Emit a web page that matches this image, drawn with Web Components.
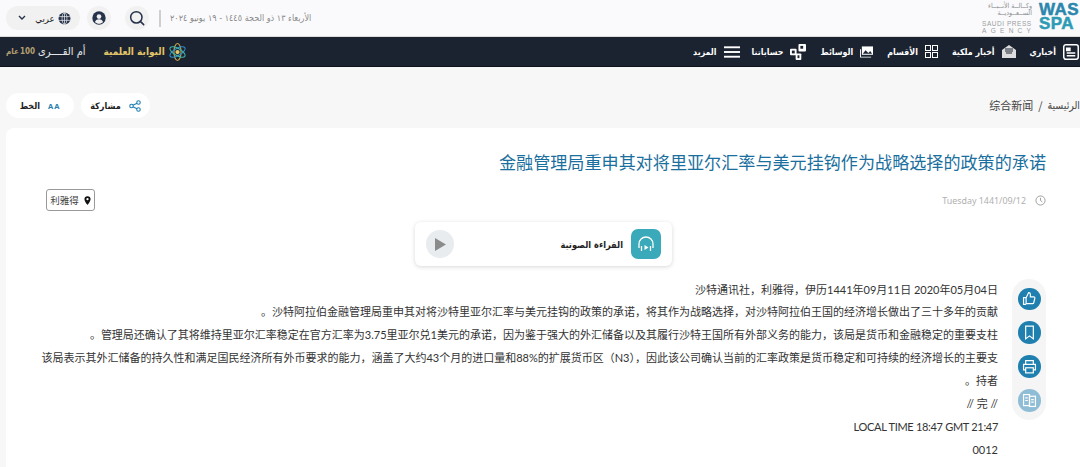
<!doctype html>
<html><head><meta charset="utf-8">
<style>
html,body{margin:0;padding:0;background:#f7f7f7;overflow:hidden;height:467px}
body{font-family:"Noto Sans","Noto Sans CJK SC",sans-serif;color:#222}
</style></head>
<body>
<spa-top></spa-top>
<spa-nav></spa-nav>
<spa-crumbs></spa-crumbs>
<spa-article></spa-article>
<script>
const def=(n,html)=>customElements.define(n,class extends HTMLElement{constructor(){super();this.attachShadow({mode:'open'}).innerHTML=html}});
const AR='"DejaVu Sans Condensed","DejaVu Sans",sans-serif';
def('spa-top',`<style>
:host{display:flex;align-items:center;height:37px;background:#fafafc;box-sizing:border-box;padding:0 0 0 6px;border-bottom:1px solid #dcdcdc}
.pill{display:flex;align-items:center;background:#f1f1f1;border-radius:12px;height:24px}
.lang{width:74px;box-sizing:border-box;padding:0 9px 0 12px;justify-content:space-between;font:9.500px ${AR};color:#222}
.c{width:24px;border-radius:50%;justify-content:center}
.u{margin-left:7px}.s{margin-left:14px}
.div{width:2px;height:17px;background:#cfcfcf;margin-left:10px}
.date{font:9px ${AR};color:#8a8a8a;margin-left:9px;white-space:nowrap}
.logo{margin-left:auto;display:flex;align-items:center;gap:7px}
.ltxt{width:50px;font-size:6.500px;color:#9a9d9e;line-height:7px;font-family:"Liberation Sans",sans-serif}
.ar{font:7px/7.500px ${AR};text-align:right;color:#8d9091;white-space:nowrap;margin-bottom:2px}
.sp{display:block;letter-spacing:.55px;white-space:nowrap}.ag{display:block;letter-spacing:4.300px;white-space:nowrap}
.mark{width:41px;height:30px;font:bold 17px/14px "Liberation Sans",sans-serif;color:#2b86ad;letter-spacing:.4px;white-space:nowrap;-webkit-text-stroke:.5px currentColor}
.mark b{display:block;color:#2e9bb5}
</style>
<div class="pill lang"><svg width="8" height="6" viewBox="0 0 8 6"><path d="M1 1l3 3 3-3" fill="none" stroke="#26324a" stroke-width="1.4"/></svg><span dir="rtl" style="margin-left:6px">عربي</span><svg width="13" height="13" viewBox="0 0 24 24" fill="none" stroke="#26324a" stroke-width="2"><circle cx="12" cy="12" r="11" fill="#26324a" stroke="none"/><g stroke="#f1f1f1" stroke-width="1.3"><ellipse cx="12" cy="12" rx="4.5" ry="11"/><path d="M2 8.500h20M2 15.500h20M12 1v22"/></g></svg></div>
<div class="pill c u"><svg width="14" height="14" viewBox="0 0 24 24"><circle cx="12" cy="12" r="11.500" fill="#26324a"/><circle cx="12" cy="9.500" r="4" fill="#f1f1f1"/><path d="M5 19c1.500-4 4-5 7-5s5.500 1 7 5c-2 2-4.500 3-7 3s-5-1-7-3z" fill="#f1f1f1"/></svg></div>
<div class="pill c s"><svg width="16" height="16" viewBox="0 0 24 24" fill="none" stroke="#26324a" stroke-width="2.300"><circle cx="11" cy="11" r="8.500"/><path d="M17 17l5 5" stroke-linecap="round"/></svg></div>
<div class="div"></div>
<div class="date" dir="rtl">الأربعاء ١٣ ذو الحجة ١٤٤٥ - ١٩ يونيو ٢٠٢٤</div>
<div class="logo"><div class="ltxt"><div class="ar" dir="rtl">وكــالــة الأنــبــاء<br>الســعــوديــة</div><span class="sp">SAUDI PRESS</span><span class="ag">AGENCY</span></div>
<div class="mark">WAS<b>SPA</b></div></div>`);
def('nav-item',`<style>
:host{display:flex;align-items:center;gap:7px;font:bold 8.800px ${AR};color:#fff;white-space:nowrap}
::slotted(svg){display:block}
</style><span dir="rtl"><slot></slot></span><slot name="i"></slot>`);
const W='fill="none" stroke="#fff" stroke-width="1.400"';
def('spa-nav',`<style>
:host{display:flex;align-items:center;height:30px;background:#1b2330;box-sizing:border-box;padding:0 0 0 6px;border-bottom:1px solid #0f141c}
.l{display:flex;align-items:center;gap:18px}
.gold{font:bold 10px ${AR};color:#e0c469;display:flex;align-items:center;gap:4px}
.um{font:11px ${AR};color:#e8e8e8}.cent{font:bold 8px ${AR};color:#b59f70;display:flex;gap:1px}
.r{margin-left:auto;display:flex;align-items:center;gap:14px;padding-right:1px}
.more{margin-right:-2px}
</style>
<div class="l"><div style="display:flex;gap:3px;align-items:center"><span class="cent"><span dir="rtl">عام</span><span>100</span></span><span class="um" dir="rtl">أم القــــرى</span></div>
<div class="gold"><span dir="rtl">البوابة العلمية</span><svg width="17" height="20" viewBox="0 0 24 28" fill="none" stroke-width="1.500"><ellipse cx="12" cy="14" rx="5" ry="12" stroke="#c9a94e"/><ellipse cx="12" cy="14" rx="5" ry="12" stroke="#2f8fd0" transform="rotate(60 12 14)"/><ellipse cx="12" cy="14" rx="5" ry="12" stroke="#3fb6a8" transform="rotate(-60 12 14)"/><circle cx="12" cy="14" r="3" fill="#e0c469" stroke="none"/></svg></div></div>
<div class="r">
<nav-item class="more">المزيد<svg slot="i" width="16" height="12" viewBox="0 0 17 12" fill="#fff"><rect width="17" height="2"/><rect y="5" width="17" height="2"/><rect y="10" width="17" height="2"/></svg></nav-item>
<nav-item>حساباتنا<svg slot="i" width="16" height="16" viewBox="0 0 17 17" fill="#fff"><rect x="0" y="5" width="7" height="7" rx="1"/><rect x="9" y="0" width="8" height="8" rx="1"/><rect x="6" y="10" width="6" height="7" rx="1"/><rect x="2" y="7" width="3" height="3" fill="#1b2330"/><rect x="11" y="2" width="3" height="3" fill="#1b2330"/><rect x="8" y="12" width="2" height="3" fill="#1b2330"/></svg></nav-item>
<nav-item>الوسائط<svg slot="i" width="13" height="12" viewBox="0 0 14 12" fill="#fff"><path d="M2 0h12v9H2z"/><path d="M0 3h1v8h11v1H0z"/><path d="M3 8l3-4 3 3 2-2 2 3z" fill="#1b2330"/></svg></nav-item>
<nav-item>الأقسام<svg slot="i" width="13" height="13" viewBox="0 0 13 13" fill="none" stroke="#fff"><rect x=".5" y=".5" width="5" height="5"/><rect x="7.500" y=".5" width="5" height="5"/><rect x=".5" y="7.500" width="5" height="5"/><rect x="7.500" y="7.500" width="5" height="5"/></svg></nav-item>
<nav-item>أخبار ملكية<svg slot="i" width="14" height="13" viewBox="0 0 14 13" fill="#ddd"><path d="M0 5l7-5 7 5v8H0z"/><path d="M3 4h8M3 6h8M4 8h6" stroke="#1b2330"/></svg></nav-item>
<nav-item>أخباري<svg slot="i" width="16" height="16" viewBox="0 0 15 15" ${W}><rect x=".7" y=".7" width="13.600" height="13.600" rx="2"/><path d="M3.500 4h3v2h-3z" fill="#fff"/><path d="M3.500 8.500h8M3.500 11h8"/></svg></nav-item>
</div>`);
def('spa-crumbs',`<style>
:host{display:flex;align-items:center;height:61px;box-sizing:border-box;padding:16px 0 0 6px}
.b{display:flex;align-items:center;background:#fff;border-radius:13px;height:25px;font:bold 9px ${AR};color:#222;gap:8px;justify-content:center}
.f{width:68px}.sh{width:69px;margin-left:7px}
.aa{font:bold 7.500px "Noto Sans";color:#2a7fae;letter-spacing:1px}
.cr{margin-left:auto;font:11px "Noto Sans CJK SC",sans-serif;color:#444;display:flex;gap:5px;align-items:center;margin-bottom:2px}
.cr span:last-child{font:10.500px ${AR}}
</style>
<div class="b f"><span dir="rtl">الخط</span><span class="aa">AA</span></div>
<div class="b sh"><span dir="rtl">مشاركة</span><svg width="12" height="12" viewBox="0 0 24 24" fill="none" stroke="#1f7fb2" stroke-width="2.200"><circle cx="19" cy="5" r="3.500"/><circle cx="5" cy="12" r="3.500"/><circle cx="19" cy="19" r="3.500"/><path d="M8 10.500l8-4M8 13.500l8 4"/></svg></div>
<div class="cr"><span>综合新闻</span><span>/</span><span dir="rtl">الرئيسية</span></div>`);
def('read-card',`<style>
:host{display:flex;align-items:center;justify-content:space-between;width:257px;height:44px;box-sizing:border-box;background:#fff;border-radius:6px;box-shadow:0 1px 4px rgba(0,0,0,.16);padding:0 11px}
.p{width:28px;height:28px;border-radius:50%;background:#e9ecef;display:flex;align-items:center;justify-content:center}
.t{display:flex;align-items:center;gap:8px;font:bold 9.200px ${AR};color:#222}
.i{width:30px;height:30px;border-radius:7px;background:#3aa9b9;display:flex;align-items:center;justify-content:center}
</style>
<div class="p"><svg width="11" height="13" viewBox="0 0 11 13"><path d="M0 0l11 6.500L0 13z" fill="#8b8b8b"/></svg></div>
<div class="t"><span dir="rtl">القراءة الصوتية</span><div class="i"><svg width="18" height="18" viewBox="0 0 18 18" fill="none" stroke="#fff" stroke-width="1.300"><path d="M2 13V9a7 7 0 0114 0v4"/><path d="M4.500 11v5M13.500 11v5"/><path d="M7.500 10l4 2.500-4 2.500z" fill="#fff" stroke="none"/></svg></div></div>`);
const rnd=(p,o='')=>`<div class="rb" style="${o}"><svg width="17" height="17" viewBox="0 0 20 20" fill="none" stroke="#fff" stroke-width="1.400">${p}</svg></div>`;
def('spa-article',`<style>
:host{display:block;margin-left:6px;background:#fff;border-radius:8px 0 0 0;height:339px;box-sizing:border-box;padding:22px 34px 0 0;position:relative}
h1{margin:0;font:400 17.100px/24px "Noto Sans CJK SC",sans-serif;color:#1b6f9e;text-align:right}
.meta{display:flex;align-items:center;margin-top:15px;height:22px;padding-left:40px}
.loc{border:1px solid #999;border-radius:3px;height:22px;width:49px;box-sizing:border-box;display:flex;align-items:center;justify-content:center;gap:5px;font:9.500px "Noto Sans CJK SC",sans-serif;color:#444}
.dt{margin-left:auto;display:flex;align-items:center;gap:9px;font:8.900px "Noto Sans",sans-serif;color:#b0b0b0}
.rc{display:flex;justify-content:center;margin:11px 0 0 35px}
.body{margin:12.500px 48px 0 35px;font:11px/22.900px Lato,"Noto Sans CJK SC",sans-serif;color:#333;text-align:right}
.body p{margin:0}
.lt{letter-spacing:-.3px}
.side{position:absolute;right:34px;top:151px;width:0;}
.rail{position:absolute;left:-34px;top:0;width:34px;background:#f5f5f5;border-radius:17px;box-sizing:border-box;padding:8.500px 5.500px;display:flex;flex-direction:column;gap:11px;height:141px}
.rb{width:23px;height:23px;border-radius:50%;background:#1f7fae;display:flex;align-items:center;justify-content:center}
</style>
<h1>金融管理局重申其对将里亚尔汇率与美元挂钩作为战略选择的政策的承诺</h1>
<div class="meta"><div class="loc"><span>利雅得</span><svg width="7" height="9" viewBox="0 0 8 10"><path d="M4 0a3.500 3.500 0 013.500 3.500C7.500 6 4 10 4 10S.5 6 .5 3.500A3.500 3.500 0 014 0z" fill="#111"/><circle cx="4" cy="3.500" r="1.300" fill="#fff"/></svg></div>
<div class="dt"><span>Tuesday 1441/09/12</span><svg width="11" height="11" viewBox="0 0 12 12" fill="none" stroke="#999"><circle cx="6" cy="6" r="5"/><path d="M6 3v3l2 1.500"/></svg></div></div>
<div class="rc"><read-card></read-card></div>
<div class="body" dir="rtl">
<p>沙特通讯社，利雅得，伊历1441年09月11日 2020年05月04日</p>
<p>沙特阿拉伯金融管理局重申其对将沙特里亚尔汇率与美元挂钩的政策的承诺，将其作为战略选择，对沙特阿拉伯王国的经济增长做出了三十多年的贡献。</p>
<p>管理局还确认了其将维持里亚尔汇率稳定在官方汇率为3.75里亚尔兑1美元的承诺，因为鉴于强大的外汇储备以及其履行沙特王国所有外部义务的能力，该局是货币和金融稳定的重要支柱。</p>
<p>该局表示其外汇储备的持久性和满足国民经济所有外币要求的能力，涵盖了大约43个月的进口量和88%的扩展货币区（N3），因此该公司确认当前的汇率政策是货币稳定和可持续的经济增长的主要支持者。</p>
<p>// 完 //</p>
<p class="lt">LOCAL TIME 18:47 GMT 21:47</p>
<p>0012</p>
</div>
<div class="side"><div class="rail">
${rnd('<path d="M6 9l3-6c1.500 0 2 1 2 2v3h4c1 0 1.500.8 1.300 1.700l-1.300 5.300c-.2.700-.7 1-1.300 1H6zM6 9H3v8h3"/>')}
${rnd('<path d="M5.500 2.500h9v15L10 14l-4.500 3.500z"/>')}
${rnd('<path d="M5.500 7V3h9v4M5.500 14H3V7.500h14V14h-2.500"/><rect x="5.500" y="11.500" width="9" height="6"/>')}
${rnd('<rect x="3" y="3" width="7" height="13"/><rect x="10" y="5" width="7" height="12"/><path d="M5 7h3M5 10h3M12 9h3M12 12h3"/>','background:#8fbdd6')}
</div></div>`);
</script>
</body></html>
